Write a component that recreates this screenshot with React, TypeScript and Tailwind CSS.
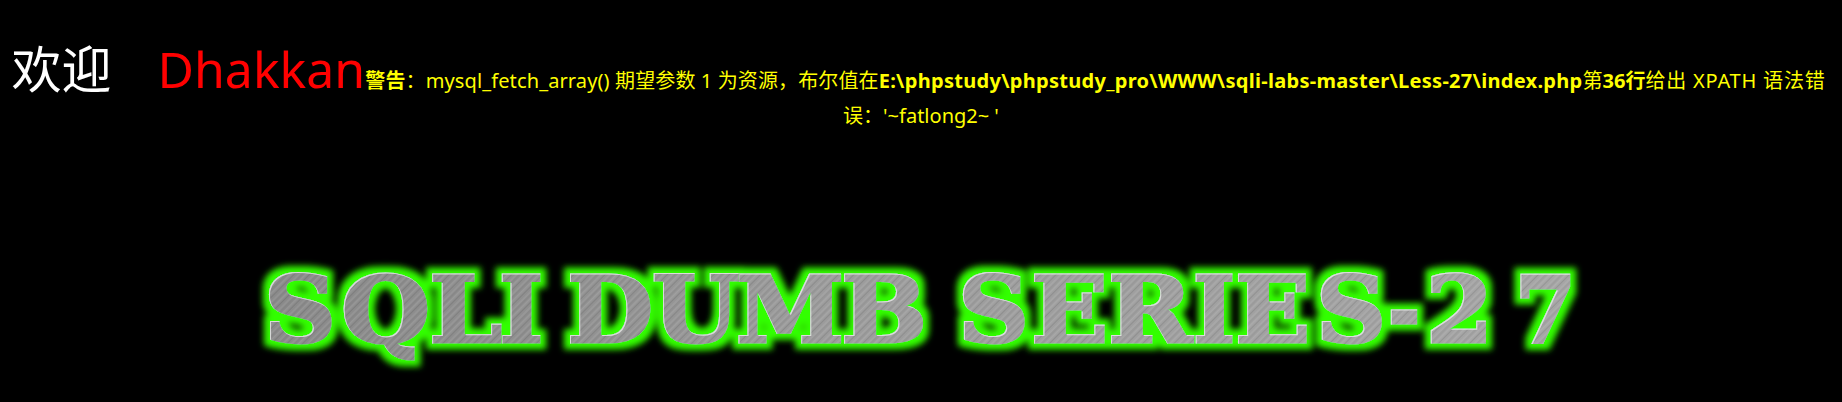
import React from 'react'

// left edge and width of every logo letter, read off the reference
const letters: [string, number, number][] = [
  ['S', 265, 70],
  ['Q', 342, 87],
  ['L', 430, 71],
  ['I', 500, 42],
  ['D', 568, 84],
  ['U', 653, 85],
  ['M', 737, 106],
  ['B', 842, 84],
  ['S', 959, 69],
  ['E', 1032, 75],
  ['R', 1109, 82],
  ['I', 1194, 40],
  ['E', 1236, 73],
  ['S', 1317, 68],
  ['-', 1389, 30],
  ['2', 1427, 65],
  ['7', 1516, 59],
]

function Logo() {
  return (
    <svg width="1842" height="130" viewBox="0 250 1842 130" className="block">
      <defs>
        <linearGradient id="sheen" x1="0" y1="0" x2="1" y2="0">
          <stop offset="0.14" stopColor="#8a8a8a" />
          <stop offset="0.3" stopColor="#909090" />
          <stop offset="0.45" stopColor="#9c9c9c" />
          <stop offset="0.6" stopColor="#9f9f9f" />
          <stop offset="0.86" stopColor="#a6a6a6" />
        </linearGradient>
        <pattern id="stripes" width="11" height="11" patternUnits="userSpaceOnUse" patternTransform="rotate(45)">
          <rect x="1" width="1.5" height="11" fill="#ffffff" opacity="0.1" />
          <rect x="4" width="1" height="11" fill="#000000" opacity="0.1" />
          <rect x="7" width="2" height="11" fill="#ffffff" opacity="0.07" />
          <rect x="9.5" width="1" height="11" fill="#000000" opacity="0.08" />
        </pattern>
        <pattern id="brushed" x="0" y="250" width="1842" height="130" patternUnits="userSpaceOnUse">
          <rect width="1842" height="130" fill="url(#sheen)" />
          <rect width="1842" height="130" fill="url(#stripes)" />
        </pattern>
        <filter id="glow" filterUnits="userSpaceOnUse" x="200" y="250" width="1440" height="130">
          <feMorphology in="SourceAlpha" operator="dilate" radius="6" result="fat" />
          <feGaussianBlur in="fat" stdDeviation="3" result="soft" />
          <feFlood floodColor="#33ff00" />
          <feComposite in2="soft" operator="in" result="green" />
          <feOffset in="SourceAlpha" dx="1" dy="1" result="moved" />
          <feFlood floodColor="#f2f2f2" floodOpacity="0.7" />
          <feComposite in2="moved" operator="out" />
          <feComposite in2="SourceAlpha" operator="in" result="rim" />
          <feMerge>
            <feMergeNode in="green" />
            <feMergeNode in="SourceGraphic" />
            <feMergeNode in="rim" />
          </feMerge>
        </filter>
      </defs>
      <g
        filter="url(#glow)"
        fill="url(#brushed)"
        stroke="url(#brushed)"
        strokeWidth="3"
        strokeLinejoin="miter"
        fontSize="91"
        fontWeight="700"
        fontFamily='"DejaVu Serif", serif'
      >
        {letters.map(([ch, x, w]) => (
          <text key={x} x={x - 1} y="341" textLength={w + 2} lengthAdjust="spacingAndGlyphs">
            {ch}
          </text>
        ))}
      </g>
    </svg>
  )
}

export default function App() {
  return (
    <div className="min-h-[402px] bg-black overflow-hidden">
      <div className="pt-[44px] text-center text-white text-[20px] leading-[35px] font-['Noto_Sans','Noto_Sans_CJK_SC',sans-serif] whitespace-nowrap">
        <span className="text-[50px] leading-none pr-[7px]">欢迎&nbsp;&nbsp;&nbsp;</span>
        <span className="text-[50px] leading-none text-[#ff0000]">Dhakkan</span>
        <span className="text-[#ffff00]">
          <span className="tracking-[0.12px]"><b>警告</b>：mysql_fetch_array() 期望参数 1 为资源，布尔值在</span>
          <b className="tracking-[0.3px]">E:\phpstudy\phpstudy_pro\WWW\sqli-labs-master\Less-27\index.php</b>第<b>36</b><b>行</b>
          <span className="tracking-[0.8px] pr-[5px]">给出 XPATH 语法错</span>
          <br />
          误：'~fatlong2~ '
        </span>
      </div>
      <div className="mt-[118px]">
        <Logo />
      </div>
    </div>
  )
}
